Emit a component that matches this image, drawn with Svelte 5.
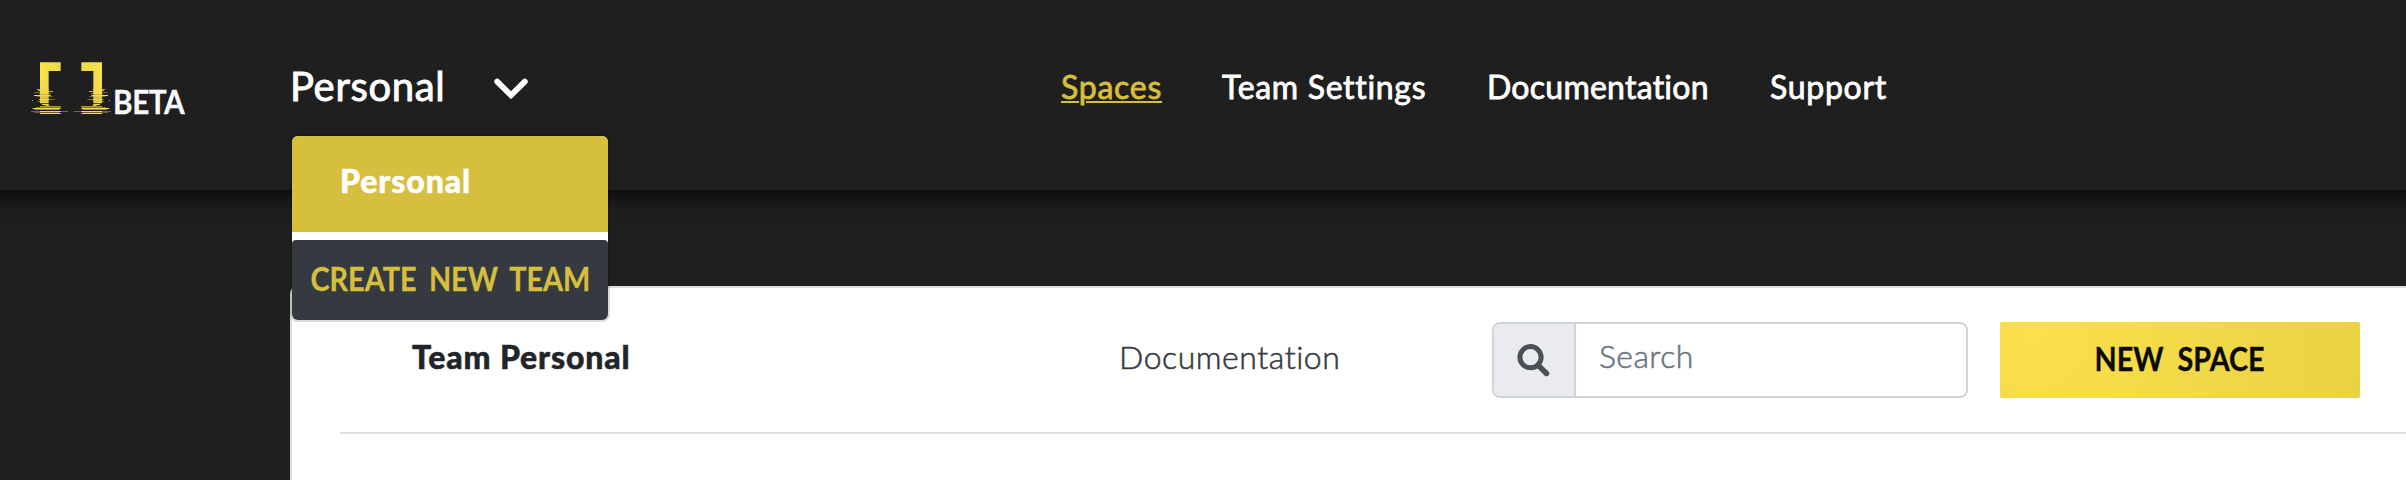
<script>
  const links = [
    { label: 'Spaces', active: true, tracking: 0.75 },
    { label: 'Team Settings', tracking: 0.68 },
    { label: 'Documentation', tracking: 0.25 },
    { label: 'Support', tracking: 0.7 },
  ];

  // Horizontal scan lines of the glitch at the foot of each bracket: x, y, width, height, opacity
  const glitch = [
    [50, 117, 12, 3, 0.6], [84, 117, 4, 3, 0.5], [54, 120, 10, 3, 0.8],
    [43, 126, 20, 3, 0.4], [84, 123, 15, 3, 0.8], [58, 129, 34, 3, 0.6],
    [42, 135, 50, 3, 1], [50, 138, 12, 3, 0.4], [84, 138, 14, 3, 0.4],
    [36, 150, 3, 3, 0.8], [56, 147, 32, 3, 0.7], [84, 147, 20, 3, 0.4],
    [54, 153, 8, 3, 0.5], [66, 162, 20, 3, 1], [76, 165, 12, 3, 0.8],
    [60, 168, 62, 3, 0.65], [48, 171, 74, 3, 0.45], [38, 174, 84, 3, 1], [44, 177, 74, 3, 0.6],
    [33, 183, 111, 3, 0.4], [60, 183, 62, 3, 1], [42, 186, 76, 3, 0.35], [60, 189, 62, 3, 1],
  ];
</script>

<div class="page">
  <header class="topbar">
    <a class="brand" href="#home">
      <svg class="mark" viewBox="0 0 270 171" aria-hidden="true">
        <defs>
          <linearGradient id="gold" x1="0" y1="0" x2="1" y2="1">
            <stop offset="0" stop-color="#fbe34c" />
            <stop offset="1" stop-color="#e9d144" />
          </linearGradient>
          <g id="bracket">
            <path d="M60 37H122V63H86V160H60Z" fill="url(#gold)" />
            <path d="M58 133.500H88M58 141.500H86M60 146H86M60 153H86" stroke="#1f1f1f" stroke-width="1.500" opacity=".35" />
            {#each glitch as [x, y, width, height, opacity]}
              <rect {x} {y} {width} {height} {opacity} fill="#f4dc49" />
            {/each}
          </g>
        </defs>
        <g transform="translate(-21 -27)">
          <use href="#bracket" />
          <use href="#bracket" transform="translate(306 0) scale(-1 1)" />
        </g>
      </svg>
      <span class="beta">BETA</span>
    </a>

    <div class="team">
      <button class="team-toggle">
        <span class="team-name">Personal</span>
        <svg class="chevron" viewBox="0 0 34 21" aria-hidden="true">
          <path d="M3.200 3.600 17 17.200 30.800 3.600" fill="none" stroke="#fff" stroke-width="5.800" stroke-linecap="round" />
        </svg>
      </button>
      <div class="menu">
        <div class="menu-item">Personal</div>
        <button class="create"><span class="caps">CREATE NEW TEAM</span></button>
      </div>
    </div>

    <nav class="links">
      {#each links as link}
        <a href="#top" class:active={link.active} style="letter-spacing: {link.tracking}px">{link.label}</a>
      {/each}
    </nav>
  </header>

  <main class="panel">
    <div class="toolbar">
      <h1>Team Personal</h1>
      <a class="docs" href="#docs">Documentation</a>
      <div class="search">
        <span class="search-icon">
          <svg viewBox="0 0 33 33" aria-hidden="true">
            <circle cx="13.500" cy="13.200" r="10.600" fill="none" stroke="#495057" stroke-width="5" />
            <path d="M21.500 21.500 29.500 29.500" stroke="#495057" stroke-width="5.400" stroke-linecap="round" />
          </svg>
        </span>
        <span class="placeholder">Search</span>
      </div>
      <button class="new-space"><span class="caps">NEW SPACE</span></button>
    </div>
  </main>
</div>

<style>
  :global(body) {
    background: #1f1f1f;
  }
  .page {
    box-sizing: border-box;
    width: 2406px;
    height: 480px;
    overflow: hidden;
    background: #1f1f1f;
    font-family: Lato, "Open Sans", sans-serif;
    font-size: 32px;
    line-height: 38px;
    font-variant-ligatures: none;
  }
  .page * {
    box-sizing: border-box;
  }
  a {
    color: inherit;
    text-decoration: none;
  }
  button {
    margin: 0;
    padding: 0;
    border: 0;
    background: none;
    color: inherit;
    font: inherit;
    white-space: nowrap;
  }
  .topbar {
    position: relative;
    z-index: 1;
    display: grid;
    grid-template-columns: 265px 769px 1fr;
    align-items: start;
    height: 190px;
    padding-left: 27px;
    background: #1f1f1f;
    box-shadow: 0 -10px 20px 14px rgba(0, 0, 0, 0.9);
    color: #fff;
  }
  .brand {
    display: flex;
    padding-top: 59px;
  }
  .mark {
    flex: none;
    width: 90px;
    height: 57px;
  }
  .beta {
    margin: 24px 0 0 -4px;
    font-weight: 700;
    letter-spacing: -0.500px;
    color: #f8f9fc;
    transform: scaleX(0.93);
    transform-origin: left;
    -webkit-text-stroke: 0.300px currentColor;
  }
  .caps {
    display: inline-block;
    transform: scaleX(0.9);
    -webkit-text-stroke: 0.300px currentColor;
  }
  .team {
    position: relative;
  }
  .team-toggle {
    display: flex;
    align-items: center;
    height: 48px;
    margin: 62px 0 0 -2px;
  }
  .team-name {
    width: 204px;
    text-align: left;
    font-size: 40px;
    line-height: 48px;
    letter-spacing: 0.650px;
    -webkit-text-stroke: 0.900px currentColor;
  }
  .chevron {
    width: 34px;
    height: 21px;
    margin-top: 5px;
  }
  .menu {
    position: absolute;
    top: 136px;
    left: 0;
    width: 316px;
    overflow: hidden;
    border-radius: 6px;
    background: #fff;
    box-shadow: 0 0 0 2px rgba(0, 0, 0, 0.15);
    font-weight: 900;
  }
  .menu-item {
    height: 96px;
    margin-bottom: 8px;
    padding: 26px 0 0 48px;
    background: #d6be3f;
    letter-spacing: 0.900px;
    -webkit-text-stroke: 0.500px currentColor;
  }
  .create {
    display: flex;
    align-items: center;
    justify-content: center;
    width: 316px;
    height: 80px;
    padding-bottom: 2px;
    border-radius: 4px;
    background: #343a40;
    color: #d6be3f;
    font-weight: 700;
    word-spacing: 6px;
  }
  .links {
    display: grid;
    grid-template-columns: 161px 265px 283px auto;
    padding-top: 68px;
    white-space: nowrap;
    -webkit-text-stroke: 0.800px currentColor;
  }
  .links .active {
    justify-self: start;
    color: #d6be3f;
    text-decoration: underline;
    text-decoration-thickness: 2px;
    text-underline-offset: 2px;
  }
  .panel {
    height: 300px;
    margin: 96px 0 0 290px;
    padding-left: 48px;
    border: 2px solid #dedfdf;
    border-right: 0;
    border-radius: 8px 0 0 0;
    background: #fff;
  }
  .toolbar {
    display: grid;
    grid-template-columns: 708px 372px 476px 392px;
    height: 146px;
    padding: 34px 0 0 72px;
    border-bottom: 2px solid #dedfdf;
    color: #212529;
  }
  h1 {
    margin: 16px 0 0;
    font-size: 32px;
    font-weight: 900;
    line-height: 38px;
    letter-spacing: 0.850px;
    -webkit-text-stroke: 0.500px currentColor;
  }
  .docs {
    margin: 16px 0 0 -1px;
    color: #343a40;
    font-weight: 300;
    letter-spacing: 0.550px;
    -webkit-text-stroke: 0.550px currentColor;
  }
  .search {
    display: flex;
    width: 476px;
    height: 76px;
    overflow: hidden;
    border: 2px solid #ced4da;
    border-radius: 8px;
  }
  .search-icon {
    display: flex;
    align-items: center;
    justify-content: center;
    width: 82px;
    padding-right: 2px;
    border-right: 2px solid #ced4da;
    background: #e9ebef;
  }
  .search-icon svg {
    width: 33px;
    height: 33px;
  }
  .placeholder {
    padding: 13px 0 0 23px;
    color: #6c757d;
    font-weight: 300;
    letter-spacing: 0.400px;
    -webkit-text-stroke: 0.550px currentColor;
  }
  .new-space {
    display: flex;
    align-items: center;
    justify-content: center;
    width: 360px;
    height: 76px;
    margin-left: 32px;
    padding-bottom: 2px;
    border-radius: 2px;
    background: radial-gradient(circle at 34px 10px, #fae04a, #e8d044 370px);
    color: #0b0b0b;
    font-weight: 700;
    word-spacing: 8px;
  }
</style>
